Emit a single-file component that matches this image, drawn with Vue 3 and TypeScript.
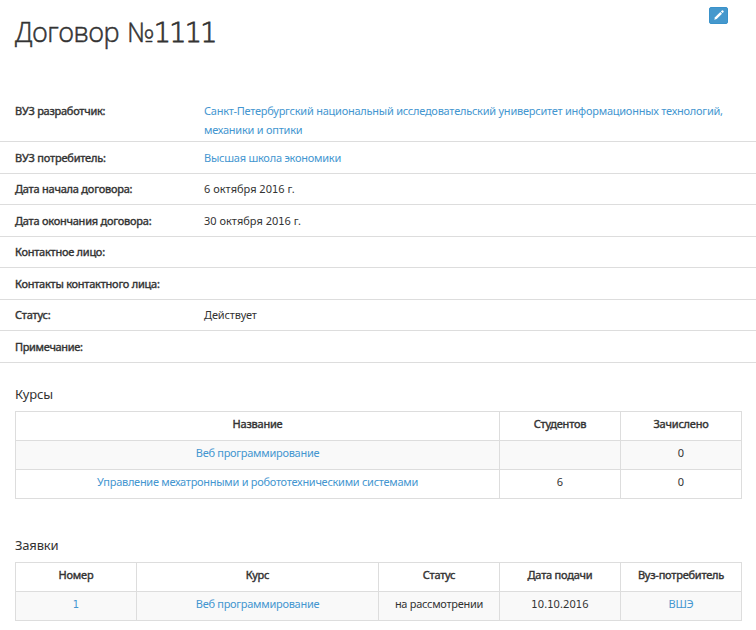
<script setup lang="ts">
interface Field {
  label: string
  value?: string
  link?: boolean
  labelSpacing: number
  valueSpacing?: number
}

const fields: Field[] = [
  {
    label: 'ВУЗ разработчик:',
    value: 'Санкт-Петербургский национальный исследовательский университет информационных технологий, механики и оптики',
    link: true,
    labelSpacing: -0.25,
    valueSpacing: -0.24,
  },
  { label: 'ВУЗ потребитель:', value: 'Высшая школа экономики', link: true, labelSpacing: -0.2, valueSpacing: -0.24 },
  { label: 'Дата начала договора:', value: '6 октября 2016 г.', labelSpacing: -0.22, valueSpacing: 0 },
  { label: 'Дата окончания договора:', value: '30 октября 2016 г.', labelSpacing: -0.23, valueSpacing: 0 },
  { label: 'Контактное лицо:', labelSpacing: -0.25 },
  { label: 'Контакты контактного лица:', labelSpacing: -0.24 },
  { label: 'Статус:', value: 'Действует', labelSpacing: -0.22, valueSpacing: -0.12 },
  { label: 'Примечание:', labelSpacing: -0.32 },
]

// The digit one is set in a face that gives it a foot, so texts are split around it.
const runs = (text: string): string[] => text.match(/1+|[^1]+/g) ?? []
const isOne = (run: string): boolean => run.startsWith('1')
</script>

<template>
  <main class="page">
    <header class="header">
      <h1>Договор <span class="sign">№</span><span class="title-num">1111</span></h1>
      <button class="edit" type="button" aria-label="Редактировать">
        <svg viewBox="0 0 10 10" width="10" height="10">
          <path d="M0.3 9.7 1 7.3 6.3 2 8 3.7 2.7 9z" />
          <path d="M6.9 1.4 7.9.4Q8.5 0 9 .5L9.5 1Q10 1.5 9.6 2.1L8.6 3.1z" />
        </svg>
      </button>
    </header>

    <dl class="fields">
      <div v-for="f in fields" :key="f.label" class="field">
        <dt><span :style="{ letterSpacing: f.labelSpacing + 'px' }">{{ f.label }}</span></dt>
        <dd>
          <a v-if="f.link" :style="{ letterSpacing: f.valueSpacing + 'px' }">{{ f.value }}</a>
          <span v-else-if="f.value" :style="{ letterSpacing: f.valueSpacing + 'px' }"><span
            v-for="(run, i) in runs(f.value)" :key="i" :class="{ one: isOne(run) }">{{ run }}</span></span>
        </dd>
      </div>
    </dl>

    <section class="block courses">
      <h2>Курсы</h2>
      <table>
        <colgroup><col class="wide" /><col class="narrow" /><col class="narrow" /></colgroup>
        <thead>
          <tr><th>Название</th><th>Студентов</th><th>Зачислено</th></tr>
        </thead>
        <tbody>
          <tr><td><a>Веб программирование</a></td><td></td><td class="num">0</td></tr>
          <tr>
            <td><a>Управление мехатронными и робототехническими системами</a></td>
            <td class="num">6</td><td class="num">0</td>
          </tr>
        </tbody>
      </table>
    </section>

    <section class="block requests">
      <h2>Заявки</h2>
      <table>
        <colgroup>
          <col class="narrow" /><col class="medium" /><col class="narrow" /><col class="narrow" /><col class="narrow" />
        </colgroup>
        <thead>
          <tr><th>Номер</th><th>Курс</th><th>Статус</th><th>Дата подачи</th><th>Вуз-потребитель</th></tr>
        </thead>
        <tbody>
          <tr>
            <td class="num"><a class="one">1</a></td>
            <td><a>Веб программирование</a></td>
            <td>на рассмотрении</td>
            <td class="num"><span
              v-for="(run, i) in runs('10.10.2016')" :key="i" :class="{ one: isOne(run) }">{{ run }}</span></td>
            <td><a>ВШЭ</a></td>
          </tr>
        </tbody>
      </table>
    </section>
  </main>
</template>

<style>
body {
  background: #fff;
}
</style>

<style scoped>
.page {
  height: 630px;
  overflow: hidden;
  font: 11px/19px "Noto Sans", "Open Sans", sans-serif;
  color: #333;
}
.one {
  font-family: "DejaVu Sans Condensed", "DejaVu Sans", sans-serif;
  font-stretch: condensed;
  line-height: 1;
}
.header {
  display: flex;
  justify-content: space-between;
  align-items: flex-start;
  height: 95px;
  padding: 7px 28px 0 15px;
  box-sizing: border-box;
}
h1 {
  margin: 7px 0 0;
  font: 300 27px/36px "Open Sans", "Noto Sans", sans-serif;
  letter-spacing: -0.55px;
  -webkit-text-stroke: 0.5px #333;
}
.sign {
  margin-left: 1.5px;
}
.title-num {
  font-family: "DejaVu Sans Light", "DejaVu Sans", sans-serif;
  font-weight: 200;
  line-height: 1;
  letter-spacing: -1.65px;
  -webkit-text-stroke: 0.8px #333;
}
.edit {
  display: flex;
  align-items: center;
  justify-content: center;
  width: 19px;
  height: 17px;
  padding: 0 0 2px;
  box-sizing: border-box;
  border: 1px solid #3a92ca;
  border-radius: 2px;
  background: #4598cd;
}
.edit svg {
  fill: #fff;
}
.fields {
  margin: 0;
}
.field {
  display: grid;
  grid-template-columns: 189px 1fr;
  padding: 5.5px 20px 6px 15px;
  min-height: 19px;
  border-bottom: 1px solid #ddd;
}
.field:first-child {
  padding-top: 6px;
  padding-bottom: 2px;
}
dt,
dd {
  margin: 0;
}
dt,
th {
  font-weight: 400;
  -webkit-text-stroke: 0.4px #333;
}
a {
  color: #4496d0;
}
.block {
  padding: 0 14px 0 15px;
}
.courses {
  padding-top: 20.5px;
}
.requests {
  padding-top: 35px;
}
h2 {
  margin: 0 0 6px;
  font-size: 13px;
  line-height: 22px;
  font-weight: 400;
  letter-spacing: -0.2px;
}
table {
  width: 727px;
  border-collapse: collapse;
  table-layout: fixed;
}
.narrow {
  width: 121px;
}
.medium {
  width: 242px;
}
th,
td {
  height: 29px;
  padding: 0 0 5px;
  box-sizing: border-box;
  border: 1px solid #ddd;
  text-align: center;
  white-space: nowrap;
  letter-spacing: -0.22px;
}
td {
  letter-spacing: -0.28px;
}
td.num {
  letter-spacing: 0.1px;
}
tbody tr:nth-child(odd) {
  background: #f9f9f9;
}
</style>
